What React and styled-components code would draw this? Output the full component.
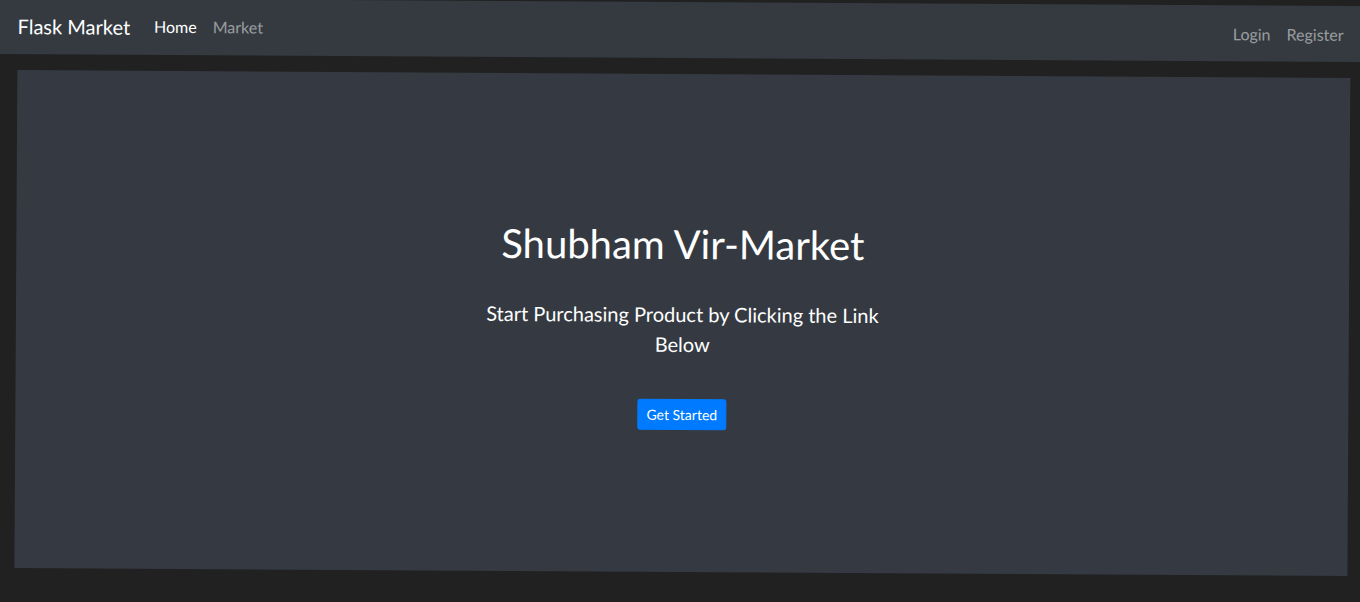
import React from "react";
import styled, { createGlobalStyle } from "styled-components";

const GlobalStyle = createGlobalStyle`
  html, body {
    margin: 0;
    padding: 0;
    background: #212121;
    overflow: hidden;
  }
  body {
    font-family: "Lato", "Noto Sans", sans-serif;
    color: #fff;
  }
  * { box-sizing: border-box; }
`;

const Page = styled.div`
  width: 1360px;
  height: 602px;
  background: #212121;
  transform-origin: 680px 301px;
  transform: translate(0px, 2px) rotate(0.34deg);
`;

const NavBar = styled.nav`
  height: 56px;
  margin: 0 -8px;
  background: #343a40;
  display: flex;
  align-items: center;
  padding: 0 18px 0 24px;
`;

const Brand = styled.a`
  font-size: 20px;
  line-height: 30px;
  color: #fff;
  margin-right: 16px;
  text-decoration: none;
`;

const NavList = styled.ul`
  display: flex;
  list-style: none;
  margin: 0;
  padding: 0;
  margin-left: ${(p) => (p.$right ? "auto" : "0")};
  transform: translateY(${(p) => (p.$right ? "1px" : "0")});
`;

const NavLink = styled.a`
  display: block;
  padding: 8px;
  font-size: 16px;
  line-height: 24px;
  color: ${(p) => (p.$active ? "#ffffff" : "rgba(255,255,255,0.5)")};
  text-decoration: none;
`;

const Jumbotron = styled.section`
  margin: 16px 11px 0 16px;
  height: 498px;
  background: #353a42;
  display: flex;
  flex-direction: column;
  align-items: center;
  justify-content: center;
  text-align: center;
`;

const Title = styled.h1`
  margin: 3px 0 31px;
  font-size: 40px;
  line-height: 48px;
  font-weight: 400;
  color: #fff;
`;

const Lead = styled.p`
  margin: 0 0 40px;
  width: 410px;
  font-size: 20px;
  line-height: 30px;
  color: #fff;
`;

const Button = styled.a`
  display: inline-block;
  padding: 4px 8px;
  font-size: 14px;
  line-height: 21px;
  color: #fff;
  background: #007bff;
  border: 1px solid #007bff;
  border-radius: 3px;
  text-decoration: none;
`;

export default function App() {
  return (
    <>
      <GlobalStyle />
      <Page>
        <NavBar>
          <Brand href="#">Flask Market</Brand>
          <NavList>
            <li><NavLink $active href="#">Home</NavLink></li>
            <li><NavLink href="#">Market</NavLink></li>
          </NavList>
          <NavList $right>
            <li><NavLink href="#">Login</NavLink></li>
            <li><NavLink href="#">Register</NavLink></li>
          </NavList>
        </NavBar>
        <Jumbotron>
          <Title>Shubham Vir-Market</Title>
          <Lead>Start Purchasing Product by Clicking the Link Below</Lead>
          <Button href="#">Get Started</Button>
        </Jumbotron>
      </Page>
    </>
  );
}
